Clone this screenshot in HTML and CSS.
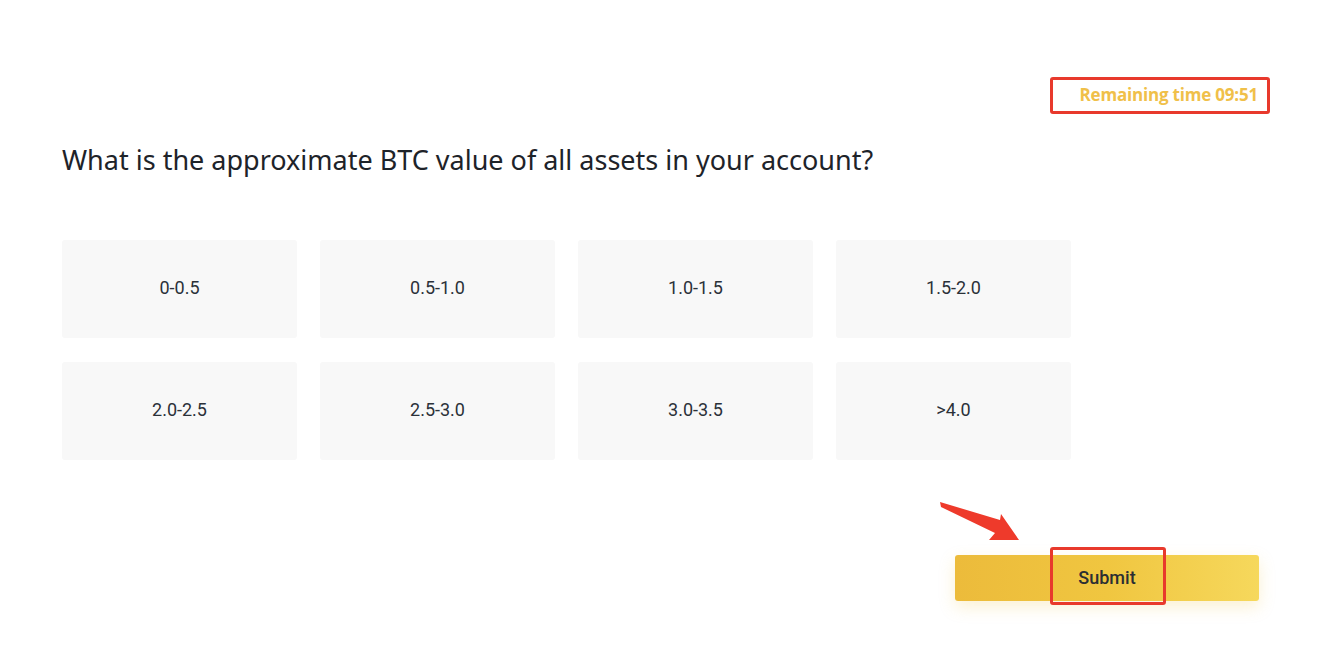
FILE: index.html
```html
<!DOCTYPE html>
<html>
<head>
<meta charset="utf-8">
<link rel="stylesheet" href="styles.css">
</head>
<body>
<div class="page">
  <div class="timer-row">
    <div class="timer">Remaining time 09:51</div>
  </div>
  <h1 class="question">What is the approximate BTC value of all assets in your account?</h1>
  <div class="options">
    <div class="option">0-0.5</div>
    <div class="option">0.5-1.0</div>
    <div class="option">1.0-1.5</div>
    <div class="option">1.5-2.0</div>
    <div class="option">2.0-2.5</div>
    <div class="option">2.5-3.0</div>
    <div class="option">3.0-3.5</div>
    <div class="option">&gt;4.0</div>
  </div>
  <div class="submit-row">
    <button class="submit">Submit</button>
    <span class="highlight"></span>
    <svg class="arrow" width="90" height="50" viewBox="0 0 90 50">
      <polygon points="0,10 60,28 61,22 79,48 49,48 55,41 1,15" fill="#ee3a2b"/>
    </svg>
  </div>
</div>
</body>
</html>
```

FILE: styles.css
```css
html, body {
  margin: 0;
  padding: 0;
  background: #ffffff;
}
.page {
  width: 1336px;
  height: 650px;
  box-sizing: border-box;
  padding: 77px 66px 0 62px;
  position: relative;
}
.timer-row {
  display: flex;
  justify-content: flex-end;
}
.timer {
  box-sizing: border-box;
  width: 220px;
  height: 37px;
  border: 3px solid #e8392c;
  border-radius: 3px;
  font-family: "Open Sans", "Liberation Sans", sans-serif;
  font-weight: 700;
  font-size: 17px;
  letter-spacing: -0.2px;
  color: #f0c049;
  display: flex;
  align-items: center;
  justify-content: flex-end;
  padding-right: 9px;
  padding-bottom: 2px;
}
.question {
  margin: 28px 0 0 0;
  font-family: "Noto Sans", "Open Sans", sans-serif;
  font-weight: 400;
  font-size: 27px;
  line-height: 36px;
  color: #1e2329;
}
.options {
  margin-top: 62px;
  display: grid;
  grid-template-columns: repeat(4, 235px);
  grid-auto-rows: 98px;
  column-gap: 23px;
  row-gap: 24px;
}
.option {
  background: #f8f8f8;
  border-radius: 3px;
  display: flex;
  align-items: center;
  justify-content: center;
  padding-bottom: 3px;
  font-family: "Roboto", "Liberation Sans", sans-serif;
  font-weight: 400;
  font-size: 18px;
  color: #2b3139;
}
.submit-row {
  position: relative;
  display: flex;
  justify-content: flex-end;
  margin-top: 95px;
  margin-right: 11px;
}
.submit {
  width: 304px;
  height: 46px;
  border: none;
  border-radius: 3px;
  background: linear-gradient(90deg, #ecbb3b 0%, #f0c640 50%, #f6d85c 100%);
  box-shadow: 0 6px 16px rgba(240, 200, 80, 0.25);
  font-family: "Roboto", "Liberation Sans", sans-serif;
  font-weight: 500;
  font-size: 18px;
  color: #2b2e33;
  padding: 0 0 2px 0;
}
.highlight {
  position: absolute;
  right: 93px;
  top: -8px;
  width: 116px;
  height: 58px;
  box-sizing: border-box;
  border: 3px solid #e8392c;
  border-radius: 3px;
}
.arrow {
  position: absolute;
  left: 878px;
  top: -63px;
}
```
